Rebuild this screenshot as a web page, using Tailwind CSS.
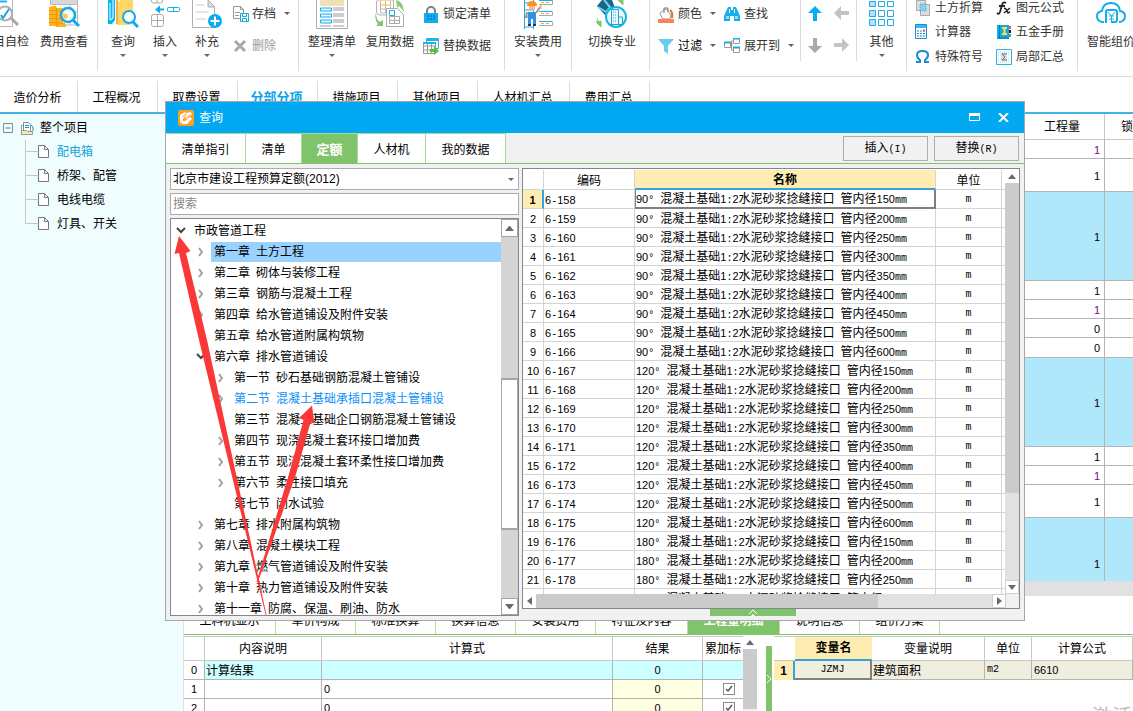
<!DOCTYPE html>
<html lang="zh-CN">
<head>
<meta charset="utf-8">
<title>查询</title>
<script src="https://cdn.jsdelivr.net/npm/@tailwindcss/browser@4"></script>
</head>
<body class="relative h-screen overflow-hidden bg-white font-['Liberation_Sans','Noto_Sans_CJK_SC',sans-serif] text-xs text-black">
<div class="flex h-full flex-col whitespace-nowrap">

<!-- Ribbon -->
<header class="flex h-[77px] shrink-0 overflow-hidden border-b border-[#dcdcdc] text-[#333]">
  <div class="flex h-[71px] w-[98px] shrink-0 border-r border-[#dcdcdc]">
    <button class="flex w-[32px] flex-col items-end pr-[3px]">
      <svg width="29" height="30" viewBox="0 0 29 30" fill="none"><path d="M0 26.500H12.500V0" stroke="#b8b8b8"/><path d="M0 1.500h7" stroke="#20b0ee" stroke-width="2"/><circle cx="5" cy="13.500" r="7" fill="#fff" stroke="#b0b0b0" stroke-width="2"/><path d="m11 18 7 7" stroke="#a8a8a8" stroke-width="3"/><path d="m1 15 2 3 6-9" stroke="#12a6e8" stroke-width="2"/></svg>
      <span class="mt-[3px] leading-[18px]">项目自检</span>
    </button>
    <button class="flex w-[64px] flex-col items-center">
      <svg width="32" height="30" viewBox="0 0 32 30" fill="none"><path d="M2 0h28v4H2z" fill="#d8d8d8"/><path d="M2.500 0v4.500h27V0M22 5v20m7.500-20v20M9 12h21M9 18h21M15 25h15" stroke="#b8b8b8"/><path d="M1 7l3-1h4l1 2h6v16h3v3H9l-2-1H1z" fill="#ffb31f"/><path d="M1 10.500h8l6 1M1 14.500h8M1 18.500h8l6 1M1 22.500h8l8 1M8.500 8v18" stroke="#ec9811"/><circle cx="20" cy="15" r="7" fill="#fff" fill-opacity=".85" stroke="#0fa9ef" stroke-width="2.500"/><path d="M14 13l5 1q2 3-1 5-3 0-4-3z" fill="#ffc65c"/><path d="m25 20 6 6" stroke="#0fa9ef" stroke-width="3"/></svg>
      <span class="mt-[3px] leading-[18px]">费用查看</span>
    </button>
  </div>
  <div class="flex h-[71px] w-[201px] shrink-0 border-r border-[#dcdcdc] pl-1">
    <button class="flex w-[42px] flex-col items-center">
      <svg width="32" height="30" viewBox="0 0 32 30"><path d="M1 0h7v20l-3 4H1z" fill="#0cb5f2"/><path d="M3 3v17l3-2V0" fill="none" stroke="#fff"/><path d="M10 3 13 0h13v22l-3 3H10z" fill="#ffd766"/><path d="M9 0h2v24H9z" fill="#e8b742"/><circle cx="22" cy="17" r="6" fill="#fff" stroke="#0fa9ef" stroke-width="2"/><path d="m26 22 5 5" stroke="#0fa9ef" stroke-width="3"/></svg>
      <span class="mt-[3px] leading-[18px]">查询</span>
      <svg class="mt-[3px]" width="6" height="4"><path d="M0 0h6L3 3z" fill="#666"/></svg>
    </button>
    <button class="flex w-[42px] flex-col items-center">
      <svg width="30" height="30" viewBox="0 0 30 30" fill="none" stroke="#aaa"><path d="M1.500 0v1q0 2 2 2h7q2 0 2-2V0M7 0v3"/><rect x="1.500" y="14.500" width="12" height="12" rx="2"/><path d="M7.500 14.500v12M1.500 20.500h12"/><rect x="17.500" y="7.500" width="12" height="4" rx="1" stroke="#11acec"/><path d="M23.500 7.500v4" stroke="#11acec"/><path d="m5 9.500 5-4v3h4v2h-4v3z" fill="#11acec" stroke="none"/></svg>
      <span class="mt-[3px] leading-[18px]">插入</span>
      <svg class="mt-[3px]" width="6" height="4"><path d="M0 0h6L3 3z" fill="#666"/></svg>
    </button>
    <button class="flex w-[42px] flex-col items-center">
      <svg width="30" height="30" viewBox="0 0 30 30" fill="none"><path d="M.500 0v27.500h22V7L16 0" stroke="#b0b0b0"/><path d="M16 0v7h7z" fill="#ddd" stroke="#b0b0b0"/><path d="M4 5h8M4 12h13M4 19h10" stroke="#ccc"/><circle cx="23" cy="21" r="7" fill="#0aa9f0"/><path d="M18.500 21h9M23 16.500v9" stroke="#fff" stroke-width="2"/></svg>
      <span class="mt-[3px] leading-[18px]">补充</span>
      <svg class="mt-[3px]" width="6" height="4"><path d="M0 0h6L3 3z" fill="#666"/></svg>
    </button>
    <div class="flex flex-col gap-3 pt-1 pl-1">
      <button class="flex h-5 items-center"><svg class="mr-[3px]" width="17" height="17" viewBox="0 0 17 17" fill="none"><path d="M1.500.500h7l3 3v9h-10zM8.500.500v3h3M3 6.500h5M3 9.500h4" stroke="#999"/><path d="M8.500 7.500h8v8h-8z" fill="#fff" stroke="#18a9e5"/><path d="M10.500 8v2.500h4V8m-4 8v-3.500h4V16" stroke="#18a9e5"/></svg>存档<svg class="ml-2" width="6" height="4"><path d="M0 0h6L3 3z" fill="#666"/></svg></button>
      <button class="flex h-5 items-center text-[#999]"><svg class="mr-1" width="16" height="14" viewBox="0 0 16 14"><path d="m3 2 10 10m0-10L3 12" stroke="#aaa" stroke-width="3"/></svg>删除</button>
    </div>
  </div>
  <div class="flex h-[71px] w-[206px] shrink-0 border-r border-[#dcdcdc] pl-1">
    <button class="flex w-[58px] flex-col items-center">
      <svg width="32" height="30" viewBox="0 0 32 30" fill="none"><path d="M.500 0v28.500h31V0" stroke="#b0b0b0"/><path d="M4 0h24v6H4z" fill="#f2dfb5"/><path d="M4.500 8h11v3h-11zm0 6h11v3h-11zm0 6h11v3h-11z" fill="#e2f6ff" stroke="#16aaec"/><path d="M17 7h11v4H17zm0 6h11v4H17zm0 6h11v4H17zm-13 6h11v2H4zm13 0h11v2H17z" fill="#cfcdd4"/></svg>
      <span class="mt-[3px] leading-[18px]">整理清单</span>
      <svg class="mt-[3px]" width="6" height="4"><path d="M0 0h6L3 3z" fill="#666"/></svg>
    </button>
    <button class="flex w-[58px] flex-col items-center">
      <svg width="30" height="30" viewBox="0 0 30 30" fill="none"><path d="M1.500 2q0-2 2-2h15v15H5q-3.500 0-3.500-3z" fill="#fff" stroke="#b3b3b3"/><path d="M5.500 1v4h10V1m-5 0v4" stroke="#ffb92d"/><path d="M5.500 5v8h10V5m-10 4h10M10.500 5v8" stroke="#bbb"/><path d="M21 0q7 1 8 12l-5-6-2 2z" fill="#8fca7c"/><path d="M1 13q0 7 4 9l3-2v6H1l2-2q-4-5-2-11" fill="#7fc56b"/><path d="M11.500 8.500h11l6 6v12h-17z" fill="#fff" stroke="#aaa"/><path d="M14.500 16.500v7h10v-7zm0 4h10m-5-5v8" stroke="#aaa"/><path d="M14.500 10.500h5v5h-5z" stroke="#15b1ed"/></svg>
      <span class="mt-[3px] leading-[18px]">复用数据</span>
    </button>
    <div class="flex flex-col gap-3 pt-1 pl-1">
      <button class="flex h-5 items-center"><svg class="mr-1" width="16" height="17" viewBox="0 0 16 17"><path d="M4 7V5a4 4 0 0 1 8 0v2" fill="none" stroke="#787e8c" stroke-width="2"/><path d="M1 7h14v10H1z" fill="#0faff5"/><path d="M4 10h2m1 0h2m1 0h2M4 13h2m1 0h2m1 0h2" stroke="#12658d"/></svg>锁定清单</button>
      <button class="flex h-5 items-center"><svg class="mr-1" width="16" height="17" viewBox="0 0 16 17" fill="none"><path d="M3.500.500h12v10h-12z" fill="#fff" stroke="#22b2ea"/><path d="M.500 4.500h12v11H.500zM.500 8h12m-12 4h12M4.500 5v11m4-11v11" fill="#fff" stroke="#999"/><path d="M0 5h13M3 2h12" stroke="#16b5ee" stroke-width="2"/><path d="M7 11h4V8l5 5-5 4v-3H7z" fill="#57c13c"/></svg>替换数据</button>
    </div>
  </div>
  <div class="flex h-[71px] w-[67px] shrink-0 justify-center border-r border-[#dcdcdc]">
    <button class="flex flex-col items-center">
      <svg width="30" height="30" viewBox="0 0 30 30" fill="none"><path d="M1.500 0v29m9-29v29M1.500 3h9m-9 7h9m-9 7h9m-9 10h9" stroke="#20aae4"/><path d="M6 5h6v4q-1 2-3 2t-3-2z" fill="#efbc98"/><path d="M4 6q0-5 5-5t5 5z" fill="#ff9022"/><path d="M5 12h8v12h-3v-5H8v5H5z" fill="#3792dd"/><path d="m4 12-1 6m10-5 4-6" stroke="#929aa0" stroke-width="2"/><path d="M5 25h3m2 0h3" stroke="#334" stroke-width="2"/><path d="m16 8 2-2m0 3V5" stroke="#ff9c32"/><path d="M29.500 0v4.500H16m13.500 7v4H16m13.500 6v4H16" stroke="#aaa"/><path d="M16 11.500h13m-13 10h13M16 .500h13" stroke="#18aeea"/><path d="M18 2.500h3m2 0h3m-8 11h3m2 0h3m-8 10h3m2 0h3" stroke="#f2a43b"/></svg>
      <span class="mt-[3px] leading-[18px]">安装费用</span>
      <svg class="mt-[3px]" width="6" height="4"><path d="M0 0h6L3 3z" fill="#666"/></svg>
    </button>
  </div>
  <div class="flex h-[71px] w-[78px] shrink-0 justify-center border-r border-[#dcdcdc]">
    <button class="flex flex-col items-center pl-[3px]">
      <svg width="32" height="30" viewBox="0 0 32 30" fill="none"><path d="m1 6 5-6h10l3 8L9 15z" fill="#176787"/><path d="m2 7 8 5 4-5-5-6M8 0l8 10" stroke="#6fd3ee" stroke-width="2"/><path d="m22 0 5 5V0zM0 22l5 5v-6zm1-4 2 5" stroke="#83c76d" fill="#83c76d"/><circle cx="20" cy="17" r="10" fill="#e7fbff" stroke="#1bb4df" stroke-width="2"/><path d="M15.500 24V9.500h7V24m0-7h4v7M13 24.500h14" stroke="#20a4cf"/><path d="M17 12h4m-4 3h4m-4 3h4m-4 3h4" stroke="#20a4cf" stroke-dasharray="1 1"/></svg>
      <span class="mt-[3px] leading-[18px]">切换专业</span>
    </button>
  </div>
  <div class="flex h-[61px] w-[151px] shrink-0 gap-2 border-r border-[#dcdcdc] pt-1 pl-2">
    <div class="flex flex-col gap-3">
      <button class="flex h-5 items-center"><svg class="mr-1" width="16" height="17" viewBox="0 0 16 17"><path d="M3 6 8 3l5 6-1 4H5L2 8z" fill="#fff" stroke="#999"/><path d="M6 7V2h4v4" fill="none" stroke="#777"/><path d="M12 4q3 2 2 8" fill="none" stroke="#cf7b41" stroke-width="2"/><path d="M0 13h16v4H0z" fill="#ff8059"/></svg>颜色<svg class="ml-2" width="6" height="4"><path d="M0 0h6L3 3z" fill="#666"/></svg></button>
      <button class="flex h-5 items-center text-black"><svg class="mr-1" width="16" height="16"><path d="M0 1h16l-6 7v8l-4-3V8z" fill="#68cdf4"/></svg>过滤<svg class="ml-2" width="6" height="4"><path d="M0 0h6L3 3z" fill="#666"/></svg></button>
    </div>
    <div class="flex flex-col gap-3">
      <button class="flex h-5 items-center"><svg class="mr-1" width="16" height="16" viewBox="0 0 16 16"><path d="M4 1h3v3h2V1h3l4 9v5h-6v-5H6v5H0v-5z" fill="#16aee8"/><path d="M2 10h3v3H2zm9 0h3v3h-3z" fill="#8ee2fb"/><path d="M5.500 3v4m5-4v4" stroke="#fff"/></svg>查找</button>
      <button class="flex h-5 items-center"><svg class="mr-1" width="16" height="16" viewBox="0 0 16 16" fill="#fff" stroke="#999"><path d="M6 6h3M7.500 3v9H9M7.500 3H9" fill="none" stroke="#bf8c4e"/><path d="M.500 4.500h6v5h-6zm9-4h6v5h-6zm0 9h6v5h-6z"/><path d="M0 4.500h7m2-4h7m-7 9h7" stroke="#16aee8" stroke-width="2"/></svg>展开到<svg class="ml-2" width="6" height="4"><path d="M0 0h6L3 3z" fill="#666"/></svg></button>
    </div>
  </div>
  <div class="grid h-[61px] w-[56px] shrink-0 grid-cols-2 grid-rows-2 place-items-center border-r border-[#dcdcdc] px-px">
    <button aria-label="上移"><svg width="14" height="18"><path d="m7 0 7 7H9v8H5V7H0z" fill="#04adf4"/></svg></button>
    <button aria-label="左移"><svg width="16" height="18"><path d="m0 7 7-7v5h8v4H7v5z" fill="#c3c3c3"/></svg></button>
    <button aria-label="下移"><svg width="14" height="16"><path d="m7 15 7-7H9V0H5v8H0z" fill="#aaa"/></svg></button>
    <button aria-label="右移"><svg width="16" height="16"><path d="m15 7-7-7v5H0v4h8v5z" fill="#c3c3c3"/></svg></button>
  </div>
  <div class="flex h-[71px] w-[50px] shrink-0 justify-center border-r border-[#dcdcdc]">
    <button class="flex flex-col items-center">
      <svg width="26" height="30" viewBox="0 0 26 30" stroke="#20ace9"><path d="M.500 1.500h6v5h-6zm0 9h6v6h-6zm0 9h6v6h-6z" fill="#b9defc"/><path d="M9.500 1.500h6v5h-6zm9 0h6v5h-6zm-9 9h6v6h-6zm9 0h6v6h-6zm-9 9h6v6h-6zm9 0h6v6h-6z" fill="#fff"/></svg>
      <span class="mt-[3px] leading-[18px]">其他</span>
      <svg class="mt-[3px]" width="6" height="4"><path d="M0 0h6L3 3z" fill="#666"/></svg>
    </button>
  </div>
  <div class="grid h-[71px] w-[171px] shrink-0 grid-cols-[81px_80px] grid-rows-[20px_24px_26px] items-center border-r border-[#dcdcdc] pl-2">
    <button class="flex items-center pb-1"><svg class="mr-1 shrink-0" width="16" height="16" viewBox="0 0 16 16"><path d="M1.500.500h9v10h-9zm4 4h9v11h-9z" fill="#ddd" stroke="#aaa"/><path d="M5 4h6v7H5z" fill="#82d2f4" stroke="#3bacd9" stroke-dasharray="1 1"/></svg>土方折算</button>
    <button class="flex items-center pb-1"><svg class="mr-1 shrink-0" width="16" height="16" viewBox="0 0 16 16" fill="none" stroke="#222"><path d="M10 3q-3-2-4 2L4 12q-1 3-3 1M3 6h6" stroke-width="1.800"/><path d="m8 8 2 1 2 4 2-1m0-4-6 5" stroke-width="1.500"/></svg>图元公式</button>
    <button class="flex items-center"><svg class="mr-1 shrink-0" width="16" height="16" viewBox="0 0 16 16"><path d="M.500.500h11v14H.500z" fill="#fff" stroke="#168ed0"/><path d="M1 1h10v3H1z" fill="#35bdf2"/><path d="M2 7h8M2 9.500h8M2 12h8" stroke="#168ed0" stroke-dasharray="2 1"/><path d="M8 6.500h2" stroke="#f05a35" stroke-width="2"/></svg>计算器</button>
    <button class="flex items-center"><svg class="mr-1 shrink-0" width="16" height="16" viewBox="0 0 16 16"><path d="M1 1h12v14H1z" fill="#11a9e6"/><path d="M2 14h11M3.500 1v13" stroke="#0876a8"/><path d="M6 4h5M6 10h5M8.500 4v6" stroke="#ffe448" stroke-width="2"/><path d="M13 2h2v3h-2z" fill="#ef593d"/><path d="M13 6h2v3h-2z" fill="#222"/><path d="M13 10h2v3h-2z" fill="#45b444"/></svg>五金手册</button>
    <button class="flex items-center"><svg class="mr-1 shrink-0" width="16" height="16" viewBox="0 0 16 16" fill="none"><path d="M1 13h4v-2q-3-2-3-5 0-4 5.500-4T13 6q0 3-3 5v2h4" stroke="#168dce" stroke-width="2"/></svg>特殊符号</button>
    <button class="flex items-center"><svg class="mr-1 shrink-0" width="16" height="16" viewBox="0 0 16 16" fill="none"><path d="M.500.500h15v15H.500z" stroke="#2eafe1"/><path d="M2 3h12M2 6h12M2 10h12M2 13h12" stroke="#93cfed" stroke-dasharray="1 1"/><path d="M5 4h6v8H5z" fill="#ddd"/><path d="M11 5H6l3 3-3 3h5" stroke="#497b8d"/></svg>局部汇总</button>
  </div>
  <button class="flex shrink-0 flex-col items-center pl-[9px]">
    <svg width="32" height="30" viewBox="0 0 32 30" fill="none" stroke="#16aeea" stroke-width="2"><path d="M9 22H7q-5-1-5-6 0-4 5-5 1-8 9-8t9 8q5 1 5 5 0 5-5 6h-1"/><path d="M11 23V12q0-2 2-2h7q2 0 2 2v8q0 2-2 2h-4"/><path d="m13 12 3.500 4 3.500-4m-6 4h5m-5 3h5m-2.500-3v5" stroke-width="1"/></svg>
    <span class="mt-[3px] leading-[18px]">智能组价</span>
  </button>
</header>

<!-- Page tabs -->
<nav class="flex h-[37px] shrink-0 border-b-2 border-[#41b3e6] pt-1" id="pageTabs"></nav>

<div class="flex min-h-0 flex-1">
  <!-- Project tree -->
  <aside class="w-[184px] shrink-0 border-r border-[#e0e0e0] bg-[#effdff] pt-[2px]">
    <div class="flex h-6 items-center pl-[3px]">
      <svg width="10" height="10" fill="none"><path d="M.500.500h9v9h-9z" stroke="#888"/><path d="M2.500 5h5" stroke="#1592d0"/></svg>
      <svg class="mr-[6px] ml-2" width="13" height="13" viewBox="0 0 13 13" fill="#fff"><path d="M.500 3.500h8v9h-8z" stroke="#999"/><path d="M2.500.500h5l2 2v7h-7z" stroke="#7792a5"/><path d="M10 3l2 2v4M4 3.500h4M4 5.500h4" stroke="#2a8bb8" fill="none"/><path d="M.500 8.500h5l1 1h5v3H.500z" fill="#f5eab7" stroke="#999"/></svg>
      整个项目
    </div>
    <ul id="projectTree"></ul>
  </aside>

  <main class="flex min-w-0 flex-1 flex-col">
    <table class="w-full shrink-0 table-fixed border-separate border-spacing-0">
      <colgroup><col><col class="w-[85px]"><col class="w-[28px]"></colgroup>
      <thead><tr class="h-[26px]"><th class="border-r border-b border-[#c8c8c8]"></th><th class="border-r border-b border-[#c8c8c8] pt-px font-normal">工程量</th><th class="overflow-hidden border-b border-[#c8c8c8] pt-px pl-4 text-left font-normal">锁定</th></tr></thead>
      <tbody id="quantities"></tbody>
    </table>
    <div class="h-[15px] shrink-0 bg-[#e1e1e1]"></div>
    <div class="mt-2 flex h-[31px] shrink-0 border-b border-[#7fc36a]" id="detailTabs"></div>
    <div class="flex min-h-0 flex-1 overflow-hidden pt-px">
      <div class="flex w-[573px] shrink-0">
        <table class="w-[559px] shrink-0 table-fixed border-separate border-spacing-0 self-start">
          <colgroup><col class="w-[21px]"><col class="w-[117px]"><col><col class="w-[90px]"><col class="w-[40px]"></colgroup>
          <thead><tr class="h-[25px]">
            <th class="border-t border-r border-b border-[#c8c8c8]"></th><th class="border-t border-r border-b border-[#c8c8c8] font-normal">内容说明</th><th class="border-t border-r border-b border-[#c8c8c8] font-normal">计算式</th><th class="border-t border-r border-b border-[#c8c8c8] font-normal">结果</th><th class="border-t border-b border-[#c8c8c8] font-normal">累加标</th></tr></thead>
          <tbody id="calc"></tbody>
        </table>
        <div class="flex w-[14px] flex-col bg-[#f0f0f0]">
          <button aria-label="向上滚动" class="grid h-[13px] place-items-center bg-white"><svg width="8" height="5"><path d="m4 0 4 5H0z" fill="#666a75"/></svg></button>
          <div class="h-[60px] bg-[#cbcbcb]"></div>
        </div>
      </div>
      <div class="mt-[10px] mr-[2px] ml-[9px] grid w-[6px] shrink-0 place-items-center bg-[#7fc36a]"><svg width="6" height="10" fill="none"><path d="m1 1 4 4-4 4" stroke="#fff"/></svg></div>
      <table class="min-w-0 flex-1 table-fixed border-separate border-spacing-0 self-start">
        <colgroup><col class="w-[21px]"><col class="w-[77px]"><col class="w-[113px]"><col class="w-[47px]"><col></colgroup>
        <thead><tr class="h-[25px]">
          <th class="border-t border-b border-[#c8c8c8]"></th><th class="border-t border-b-2 border-[#c8c8c8] border-b-[#35a4d8] bg-[#ffecb2]">变量名</th><th class="border-t border-r border-b border-[#c8c8c8] font-normal">变量说明</th><th class="border-t border-r border-b border-[#c8c8c8] font-normal">单位</th><th class="border-t border-r border-b border-[#c8c8c8] font-normal">计算公式</th></tr></thead>
        <tbody><tr class="h-[19px] bg-[#f0eedf] leading-[16px]">
          <td class="border-r-2 border-r-[#35a4d8] bg-[#ffecb2] text-center font-bold">1</td><td class="border-r-2 border-b-2 border-[#808080] text-center font-['Liberation_Mono'] text-[10px]">JZMJ</td><td class="border-r border-b border-[#b4b4b4] pt-px pl-px">建筑面积</td><td class="border-r border-b border-[#b4b4b4] pl-[2px] font-['Liberation_Mono'] text-[10px]">m2</td><td class="border-r border-b border-[#b4b4b4] pl-[2px] text-[11px]">6610</td></tr></tbody>
      </table>
    </div>
  </main>
</div>
</div>

<div class="absolute top-[705px] left-[1092px] text-[20px] leading-[24px] whitespace-nowrap text-[#bdbdbd]">激活</div>

<!-- Query window -->
<section role="dialog" aria-label="查询" class="absolute top-[101px] left-[165px] flex h-[520px] w-[860px] flex-col border border-[#a6a6a6] bg-[#f1f1f1] whitespace-nowrap">
  <div class="flex h-[31px] shrink-0 items-center bg-[#02a9f2] pr-[15px] pl-3 text-white">
    <svg class="mr-[5px]" width="16" height="16" viewBox="0 0 16 16" fill="none"><rect width="16" height="16" rx="2" fill="#ff9f1c"/><path d="M2 5l5-3 2 2-4 5q-1 3 2 2l5-4 2 2-5 5H5l-3-2z" fill="#fff"/><path d="m9 3 3-1 2 2-5 5H7z" fill="#fff"/><path d="m4 7 4-3M8 9l4-4" stroke="#ff9f1c"/></svg>
    <span class="flex-1">查询</span>
    <button aria-label="最大化" class="mr-[18px]"><svg width="11" height="9" fill="none"><path d="M.500.500h10v7H.500z" stroke="#fff"/><path d="M0 1.500h11" stroke="#fff" stroke-width="3"/></svg></button>
    <button aria-label="关闭"><svg width="11" height="9" fill="none"><path d="m1 0 9 9m0-9L1 9" stroke="#fff" stroke-width="2"/></svg></button>
  </div>
  <div class="flex h-[31px] shrink-0 border-b border-[#7fc36a]">
    <div class="flex flex-1" role="tablist" id="queryTabs"></div>
    <div class="flex gap-[6px] pt-[3px] pr-[5px]">
      <button class="h-[25px] w-[85px] border border-[#adadad] bg-[#f1f1f1]">插入<span class="font-['Liberation_Mono'] text-[10px]">(I)</span></button>
      <button class="h-[25px] w-[85px] border border-[#adadad] bg-[#f1f1f1]">替换<span class="font-['Liberation_Mono'] text-[10px]">(R)</span></button>
    </div>
  </div>
  <div class="flex min-h-0 flex-1 gap-[3px] px-1 pt-[4px]">
    <div class="flex w-[349px] shrink-0 flex-col gap-[3px] pb-[4px]">
      <div class="relative h-[22px] shrink-0">
        <select aria-label="定额库" class="h-[22px] w-full appearance-none border border-[#acacac] bg-white pl-[2px] leading-[20px]"><option>北京市建设工程预算定额(2012)</option></select>
        <svg class="pointer-events-none absolute top-[10px] right-[5px]" width="6" height="4"><path d="M0 0h6L3 3z" fill="#666"/></svg>
      </div>
      <input aria-label="搜索" placeholder="搜索" class="h-[22px] shrink-0 border border-[#acacac] bg-white pl-[2px] leading-[20px] placeholder:text-[#888]">
      <div class="flex min-h-0 flex-1 border border-[#82878f] bg-white">
        <ul class="min-w-0 flex-1 overflow-hidden pt-px" id="chapters"></ul>
        <div class="flex w-[17px] flex-col bg-[#d4d4d4]">
          <button aria-label="向上滚动" class="grid h-[18px] place-items-center border border-[#a5a5a5] bg-white"><svg width="9" height="5"><path d="M4 0h1l4 5H0z" fill="#666a75"/></svg></button>
          <div class="h-[141px]"></div>
          <div class="h-[152px] border border-t-2 border-b-2 border-[#a5a5a5] bg-white"></div>
          <div class="flex-1"></div>
          <button aria-label="向下滚动" class="grid h-[17px] place-items-center border border-[#a5a5a5] bg-white"><svg width="9" height="5"><path d="M0 0h9L5 5H4z" fill="#666a75"/></svg></button>
        </div>
      </div>
    </div>
    <div class="flex min-w-0 flex-1 flex-col">
      <div class="flex h-[441px] shrink-0 flex-col border border-[#82878f] bg-white pt-px">
        <div class="flex h-[424px] shrink-0">
          <div class="min-w-0 flex-1 overflow-hidden">
            <table class="w-full table-fixed border-separate border-spacing-0">
              <colgroup><col class="w-[21px]"><col class="w-[91px]"><col><col class="w-[66px]"><col class="w-[3px]"></colgroup>
              <thead><tr class="h-[20px] leading-[16px]"><th class="border-r border-b border-[#d4d4d4]"></th><th class="border-r border-b border-[#d4d4d4] pt-[2px] font-normal">编码</th><th class="border-r border-b-2 border-[#d4d4d4] border-b-[#35a4d8] bg-[#ffecb2] pt-[2px]">名称</th><th class="border-r border-b border-[#d4d4d4] pt-[2px] font-normal">单位</th><th class="border-b border-[#d4d4d4]"></th></tr></thead>
              <tbody id="quota"></tbody>
            </table>
          </div>
          <div class="flex w-[14px] flex-col bg-[#e1e1e1]">
            <button aria-label="向上滚动" class="grid h-[13px] place-items-center bg-white"><svg width="8" height="5"><path d="m4 0 4 5H0z" fill="#666a75"/></svg></button>
            <div class="h-[310px] bg-[#cbcbcb]"></div>
            <div class="flex-1"></div>
            <button aria-label="向下滚动" class="grid h-[14px] place-items-center border border-[#d0d0d0] bg-white"><svg width="8" height="5"><path d="M0 0h8L4 5z" fill="#666a75"/></svg></button>
          </div>
        </div>
        <div class="flex min-h-0 flex-1 bg-[#e1e1e1]">
          <button aria-label="向左滚动" class="grid w-[13px] place-items-center bg-white"><svg width="5" height="8"><path d="M5 0v8L0 4z" fill="#666a75"/></svg></button>
          <div class="w-[342px] bg-[#cbcbcb]"></div>
          <div class="flex-1"></div>
          <button aria-label="向右滚动" class="grid w-[14px] place-items-center border border-[#d0d0d0] bg-white"><svg width="5" height="8"><path d="M0 0v8l5-4z" fill="#666a75"/></svg></button>
          <div class="w-[13px] bg-[#f1f1f1]"></div>
        </div>
      </div>
      <div class="ml-[188px] grid h-[7px] w-[86px] place-items-center bg-[#7fc36a]"><svg width="10" height="7" fill="none"><path d="m1 5 4-4 4 4" stroke="#fff"/><path d="m3 7 2-2 2 2z" fill="#fff"/></svg></div>
    </div>
  </div>
</section>

<!-- Pointer annotations -->
<svg class="pointer-events-none absolute top-[230px] left-[165px]" width="160" height="390" viewBox="165 230 160 390" fill="#fb3838">
  <path d="m179 236 11.500 15-4.500 2L207 340l59.500 275h-.800L199 340l-20-87-4.500 1z"/>
  <path d="m312 405.500 2.500 18-4-1L296 474l-38 108h-1.500L289 474l14.500-54-4.500-2z"/>
</svg>

<script>
const el = id => document.getElementById(id);
// Half-width runs: digits in the sans face, other characters on a 6px grid.
const latin = s => s.replace(/\d+|[\x20-\x2f\x3a-\x7e°]+/g, m => /\d/.test(m)
  ? `<span class="text-[11px] leading-none">${m}</span>`
  : `<span class="font-['Liberation_Mono'] text-[10px] leading-none whitespace-pre">${m}</span>`);

const tabWidths = { 77: 'w-[78px]', 80: 'w-[80px]', 92: 'w-[92px]' };
el('pageTabs').innerHTML = [['造价分析', 77], ['工程概况', 80], ['取费设置', 80], ['分部分项', 80], ['措施项目', 80], ['其他项目', 80], ['人材机汇总', 92], ['费用汇总', 80]]
  .map(([t, w]) => `<a href="#" class="${tabWidths[w]} grid shrink-0 place-items-center border-r border-[#dcdcdc] pt-[2px] pr-[2px] ${t === '分部分项' ? 'text-[13px] font-bold text-[#08a5ec]' : ''}">${t}</a>`).join('');

el('projectTree').innerHTML = ['配电箱', '桥架、配管', '电线电缆', '灯具、开关'].map((t, i, a) =>
  `<li class="flex h-6 items-center pl-[25px] ${i ? '' : 'text-[#12a3da]'}"><svg width="13" height="24" fill="none"><path d="${i === a.length - 1 ? 'M.5 0v11.500H13' : 'M.5 0v24M0 11.500h13'}" stroke="#c0c8ca"/></svg><svg class="mr-2" width="11" height="14" fill="#fff"><path d="M.5.5h6l4 4v8H.5zM6.500.5v4h4" stroke="#777"/></svg>${t}</li>`).join('');

const rowHeights = { 19: 'h-[19px]', 20: 'h-[20px]', 33: 'h-[33px]', 63: 'h-[63px]', 89: 'h-[89px]' };
el('quantities').innerHTML = [[19, 1, 1], [33, 1], [89, 1], [19, 1], [19, 1, 1], [19, 0], [20, 0], [89, 1], [19, 1], [19, 1, 1], [33, 1], [63, 1]]
  .map(([h, v, purple]) => { const b = h > 60 ? 'bg-[#aee8fa]' : ''; const line = h === 63 ? 'border-r border-[#b4b4b4]' : 'border-r border-b border-[#b4b4b4]';
    return `<tr class="${rowHeights[h]} ${b} leading-[16px]"><td class="${line}"></td><td class="${line} pr-1 text-right text-[11px] ${h === 63 ? 'pt-7' : 'pt-px'} ${purple ? 'text-[#800080]' : ''}">${v}</td><td class="${h === 63 ? '' : 'border-b border-[#b4b4b4]'}"></td></tr>`; }).join('');

el('detailTabs').innerHTML = ['工料机显示', '单价构成', '标准换算', '换算信息', '安装费用', '特征及内容', '工程量明细', '说明信息', '组价方案'].map(t =>
  `<button class="${t.length === 5 ? 'w-[92px]' : 'w-[80px]'} shrink-0 border-r border-[#b5e0a2] pt-[4px] ${t === '工程量明细' ? 'bg-[#7fc36a] font-bold text-white' : ''}">${t}</button>`).join('');

el('calc').innerHTML = [0, 1, 2].map(i => {
  const c = 'border-r border-b border-[#b4b4b4]';
  return `<tr class="h-[19px] leading-[16px] ${i ? '' : 'bg-[#ccffff]'}"><td class="${c} bg-white text-center text-[11px]">${i}</td><td class="${c} pt-px pl-px">${i ? '' : '计算结果'}</td><td class="${c} pl-[2px] text-[11px]">${i ? '0' : ''}</td><td class="${c} text-center text-[11px] ${i ? 'bg-[#ffffe1]' : ''}">0</td><td class="border-b border-[#b4b4b4]">${i ? `<span class="relative ml-[20px] block h-3 w-3"><input type="checkbox" checked aria-label="累加标识 ${i}" class="block h-3 w-3 appearance-none border border-[#8c8c8c] bg-white"><svg class="pointer-events-none absolute top-[2px] left-[2px]" width="8" height="8" fill="none"><path d="m1 4 2 2 4-5" stroke="#556" stroke-width="1.500"/></svg></span>` : ''}</td></tr>`; }).join('');

el('queryTabs').innerHTML = [['清单指引', 'w-[80px]'], ['清单', 'w-[56px]'], ['定额', 'w-[56px]'], ['人材机', 'w-[68px]'], ['我的数据', 'w-[80px]']].map(([t, w]) =>
  `<button role="tab" class="${w} border-t border-r border-[#a9db95] pt-[2px] ${t === '定额' ? 'bg-[#7fc36a] text-[13px] font-bold text-white' : 'bg-white'}">${t}</button>`).join('');

const indents = ['pl-[4px]', 'pl-[24px]', 'pl-[44px]'];
const right = '<path d="m4 1 3 4-3 4" stroke="#a0a0a0" stroke-width="2"/>';
const down = '<path d="m2 2 4 4 4-4" stroke="#444" stroke-width="2"/>';
el('chapters').innerHTML = [
  [0, 'd', '市政管道工程'], [1, 'r', '第一章 土方工程'], [1, 'r', '第二章 砌体与装修工程'], [1, 'r', '第三章 钢筋与混凝土工程'], [1, 'r', '第四章 给水管道铺设及附件安装'], [1, '', '第五章 给水管道附属构筑物'], [1, 'd', '第六章 排水管道铺设'],
  [2, 'r', '第一节 砂石基础钢筋混凝土管铺设'], [2, 'r', '第二节 混凝土基础承插口混凝土管铺设'], [2, '', '第三节 混凝土基础企口钢筋混凝土管铺设'], [2, 'r', '第四节 现浇混凝土套环接口增加费'], [2, 'r', '第五节 现浇混凝土套环柔性接口增加费'], [2, 'r', '第六节 柔性接口填充'], [2, '', '第七节 闭水试验'],
  [1, 'r', '第七章 排水附属构筑物'], [1, 'r', '第八章 混凝土模块工程'], [1, 'r', '第九章 燃气管道铺设及附件安装'], [1, 'r', '第十章 热力管道铺设及附件安装'], [1, 'r', '第十一章 防腐、保温、刷油、防水']
].map(([lv, m, t], i) => `<li class="flex h-[21px] items-center ${indents[lv]}"><svg class="mr-1 shrink-0" width="12" height="10" fill="none">${m === 'r' ? right : m === 'd' ? down : ''}</svg><span class="h-[20px] flex-1 pl-[3px] leading-[20px] ${i === 1 ? 'bg-[#99d1ff]' : ''} ${i === 8 ? 'text-[#0a90fa]' : ''}">${latin(t)}</span></li>`).join('');

const diameters = [150, 200, 250, 300, 350, 400, 450, 500, 600];
const items = [90, 120, 180].flatMap(a => diameters.map(d => [a, d])).slice(0, 22);
el('quota').innerHTML = items.map(([a, d], i) => {
  const c = 'border-r border-b border-[#d4d4d4]', first = i === 0;
  return `<tr class="h-[19px] leading-[16px]"><td class="${first ? 'border-r-2 border-b border-r-[#35a4d8] border-b-[#d4d4d4] bg-[#ffecb2] font-bold' : c} pt-px text-center text-[11px]">${i + 1}</td><td class="${c} pt-[2px] pl-px">${latin(`6-${158 + i}`)}</td><td class="${first ? 'border-r-2 border-b-2 border-l border-[#808080] pt-px' : c + ' pt-[2px] pl-px'}">${latin(`${a}° 混凝土基础1:2水泥砂浆捻缝接口 管内径${d}mm`)}</td><td class="${c} pt-[2px] text-center font-['Liberation_Mono'] text-[10px]">m</td><td class="border-b border-[#d4d4d4]"></td></tr>`; }).join('');
</script>
</body>
</html>
